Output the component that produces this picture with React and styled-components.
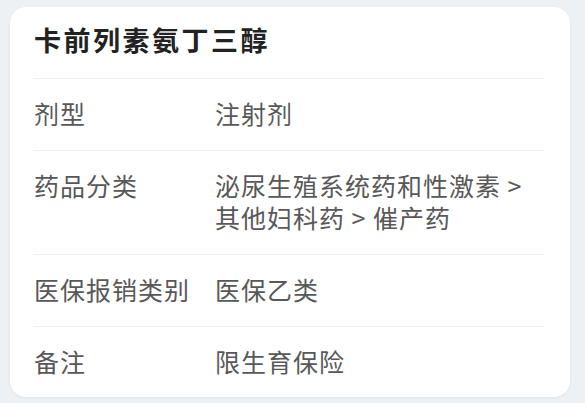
import React from "react";
import styled, { createGlobalStyle } from "styled-components";

const Global = createGlobalStyle`
  html, body { margin: 0; padding: 0; background: #eef1f4; }
  body { font-family: "Noto Sans CJK SC", "Noto Sans", sans-serif; }
`;

const Page = styled.div`
  padding: 7px 15px 7px 10px;
`;

const Card = styled.section`
  width: 560px;
  box-sizing: border-box;
  background: #ffffff;
  border-radius: 16px;
  box-shadow: 0 1px 3px rgba(0, 0, 0, 0.06);
  padding: 0 26px 0 23px;
`;

const Title = styled.h1`
  margin: 0;
  padding: 14px 0 19px 1px;
  font-size: 27px;
  line-height: 38px;
  font-weight: 700;
  letter-spacing: 2.5px;
  color: #222222;
`;

const Row = styled.div`
  display: flex;
  border-top: 1px solid #f0f0f0;
  padding: 18px 0 ${(p) => (p.$last ? "20px" : "21px")} 0;
  font-size: 25px;
  line-height: 32px;
  letter-spacing: 1px;
  color: #585858;
`;

const Label = styled.div`
  flex: 0 0 181px;
  padding-left: 1px;
`;

const Value = styled.div`
  flex: 1;
  min-width: 0;
`;

const rows = [
  ["剂型", "注射剂"],
  ["药品分类", "泌尿生殖系统药和性激素 > 其他妇科药 > 催产药"],
  ["医保报销类别", "医保乙类"],
  ["备注", "限生育保险"],
];

export default function App() {
  return (
    <Page>
      <Global />
      <Card>
        <Title>卡前列素氨丁三醇</Title>
        {rows.map(([k, v], i) => (
          <Row key={k} $last={i === rows.length - 1}>
            <Label>{k}</Label>
            <Value>{v}</Value>
          </Row>
        ))}
      </Card>
    </Page>
  );
}
